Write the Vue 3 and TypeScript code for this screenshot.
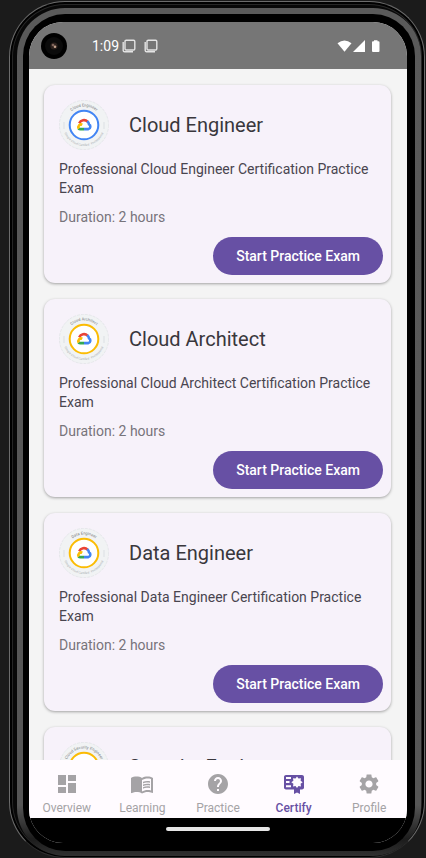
<script setup lang="ts">
import { ref } from 'vue'

interface Exam {
  id: string
  title: string
  badge: string
  description: string
  duration: string
  ring: string
}

interface Tab {
  id: string
  label: string
  path: string
}

const exams: Exam[] = [
  { id: 'engineer', title: 'Cloud Engineer', badge: 'Cloud Engineer', description: 'Professional Cloud Engineer Certification Practice Exam', duration: '2 hours', ring: '#4285f4' },
  { id: 'architect', title: 'Cloud Architect', badge: 'Cloud Architect', description: 'Professional Cloud Architect Certification Practice Exam', duration: '2 hours', ring: '#fbbc04' },
  { id: 'data', title: 'Data Engineer', badge: 'Data Engineer', description: 'Professional Data Engineer Certification Practice Exam', duration: '2 hours', ring: '#fbbc04' },
  { id: 'security', title: 'Security Engineer', badge: 'Cloud Security Engineer', description: 'Professional Security Engineer Certification Practice Exam', duration: '2 hours', ring: '#fbbc04' },
]

const tabs: Tab[] = [
  { id: 'overview', label: 'Overview', path: 'M3 13h8V3H3v10zm0 8h8v-6H3v6zm10 0h8V11h-8v10zm0-18v6h8V3h-8z' },
  { id: 'learning', label: 'Learning', path: 'M21 5c-1.11-.35-2.33-.5-3.5-.5-1.95 0-4.05.4-5.5 1.5-1.45-1.1-3.55-1.5-5.5-1.5S2.45 4.9 1 6v14.65c0 .25.25.5.5.5.1 0 .15-.05.25-.05C3.1 20.45 5.05 20 6.5 20c1.95 0 4.05.4 5.5 1.5 1.35-.85 3.8-1.5 5.5-1.5 1.65 0 3.35.3 4.75 1.05.1.05.15.05.25.05.25 0 .5-.25.5-.5V6c-.6-.45-1.25-.75-2-1zm0 13.5c-1.1-.35-2.3-.5-3.5-.5-1.7 0-4.15.65-5.5 1.5V8c1.35-.85 3.8-1.5 5.5-1.5 1.2 0 2.4.15 3.5.5v11.5zM17.5 10.5c.88 0 1.73.09 2.5.26V9.24c-.79-.15-1.64-.24-2.5-.24-1.7 0-3.24.29-4.5.83v1.66c1.13-.64 2.7-.99 4.5-.99zM13 12.49v1.66c1.13-.64 2.7-.99 4.5-.99.88 0 1.73.09 2.5.26V11.9c-.79-.15-1.64-.24-2.5-.24-1.7 0-3.24.3-4.5.83zM17.5 14.33c-1.7 0-3.24.29-4.5.83v1.66c1.13-.64 2.7-.99 4.5-.99.88 0 1.73.09 2.5.26v-1.52c-.79-.16-1.64-.24-2.5-.24z' },
  { id: 'practice', label: 'Practice', path: 'M12 2C6.48 2 2 6.48 2 12s4.48 10 10 10 10-4.48 10-10S17.52 2 12 2zm1 17h-2v-2h2v2zm2.07-7.75l-.9.92C13.45 12.9 13 13.5 13 15h-2v-.5c0-1.1.45-2.1 1.17-2.83l1.24-1.26c.37-.36.59-.86.59-1.41 0-1.1-.9-2-2-2s-2 .9-2 2H8c0-2.21 1.79-4 4-4s4 1.79 4 4c0 .88-.36 1.68-.93 2.25z' },
  { id: 'certify', label: 'Certify', path: 'M4 3H20C21.1 3 22 3.9 22 5V15.5C22 16.6 21.1 17.5 20 17.5H18V22L15 20.4L12 22V17.5H4C2.9 17.5 2 16.6 2 15.5V5C2 3.9 2.9 3 4 3ZM4 5V7H9V5ZM4 9V11H7.5V9ZM4 13.3V15.3H9V13.3ZM15 4.6L13.5 6.6L11 6.2L11.4 8.8L9.3 10.3L11.4 11.8L11 14.4L13.5 14L15 16L16.5 14L19 14.4L18.6 11.8L20.7 10.3L18.6 8.8L19 6.2L16.5 6.6Z' },
  { id: 'profile', label: 'Profile', path: 'M19.14 12.94c.04-.3.06-.61.06-.94 0-.32-.02-.64-.07-.94l2.03-1.58c.18-.14.23-.41.12-.61l-1.92-3.32c-.12-.22-.37-.29-.59-.22l-2.39.96c-.5-.38-1.03-.7-1.62-.94l-.36-2.54c-.04-.24-.24-.41-.48-.41h-3.84c-.24 0-.43.17-.47.41l-.36 2.54c-.59.24-1.13.57-1.62.94l-2.39-.96c-.22-.08-.47 0-.59.22L2.74 8.87c-.12.21-.08.47.12.61l2.03 1.58c-.05.3-.09.63-.09.94s.02.64.07.94l-2.03 1.58c-.18.14-.23.41-.12.61l1.92 3.32c.12.22.37.29.59.22l2.39-.96c.5.38 1.03.7 1.62.94l.36 2.54c.05.24.24.41.48.41h3.84c.24 0 .44-.17.47-.41l.36-2.54c.59-.24 1.13-.56 1.62-.94l2.39.96c.22.08.47 0 .59-.22l1.92-3.32c.12-.22.07-.47-.12-.61l-2.01-1.58zM12 15.6c-1.98 0-3.6-1.62-3.6-3.6s1.62-3.6 3.6-3.6 3.6 1.62 3.6 3.6-1.62 3.6-3.6 3.6z' },
]

const activeTab = ref<string>('certify')
</script>

<template>
  <div class="device">
    <div class="rim">
      <div class="bezel">
        <div class="screen">
          <header class="status">
            <svg class="camera" viewBox="0 0 26 26" aria-hidden="true">
              <circle cx="13" cy="13" r="13" fill="#000" />
              <circle cx="13" cy="13" r="9" fill="#0b0b0b" />
              <circle cx="13" cy="13" r="3.6" fill="#2c211d" />
              <circle cx="12" cy="12" r="1.3" fill="#7d6459" />
              <circle cx="14" cy="13.8" r="1.3" fill="#c3a28d" />
            </svg>
            <span class="time">1:09</span>
            <svg v-for="n in 2" :key="n" class="note" viewBox="0 0 14 14" aria-hidden="true">
              <rect x="3" y="1.2" width="9.8" height="9.8" rx="1.2" />
              <path d="M1.2 3V11.4Q1.2 12.8 2.6 12.8H11" />
            </svg>
            <svg class="signals" viewBox="0 0 44 14" aria-hidden="true">
              <path d="M0.5 4.2Q7.5 -1.2 14.5 4.2L7.5 12.8Z" />
              <path d="M28 1V13H16Z" />
              <path d="M37 1.2H40.5V2.2H41.5Q42.5 2.2 42.5 3.2V12Q42.5 13 41.5 13H36Q35 13 35 12V3.2Q35 2.2 36 2.2H37Z" />
            </svg>
          </header>

          <main class="list">
            <article v-for="exam in exams" :key="exam.id" class="card">
              <div class="heading">
                <svg class="badge" viewBox="0 0 50 50" aria-hidden="true">
                  <circle cx="25" cy="25" r="24.6" fill="#f1f3f4" stroke="#dfe2e5" stroke-width=".7" stroke-dasharray="3 1" />
                  <path d="M5 22V29M45 22V29" stroke="#cfd4d8" stroke-width=".6" />
                  <path :id="'top-' + exam.id" d="M6.5 25A18.5 18.5 0 0 1 43.5 25" fill="none" />
                  <path :id="'base-' + exam.id" d="M4 25A21 21 0 0 0 46 25" fill="none" />
                  <text class="engraving"><textPath :href="'#top-' + exam.id" startOffset="50%">{{ exam.badge }}</textPath></text>
                  <text class="engraving faint"><textPath :href="'#base-' + exam.id" startOffset="50%">Google Cloud Certified · Professional</textPath></text>
                  <circle cx="25" cy="25" r="14.3" fill="#fff" :stroke="exam.ring" stroke-width="2" />
                  <g fill="none" stroke-width="2.6">
                    <path d="M20.2 23.2A5.2 5.2 0 0 1 28.6 21.6" stroke="#ea4335" />
                    <path d="M28.2 21.2Q29.8 22.5 30 24.3A2.6 2.6 0 0 1 29.4 29.1H25" stroke="#4285f4" />
                    <path d="M25 29.1H21.3Q20.2 29.1 19.4 28.4" stroke="#34a853" />
                    <path d="M19.7 28.6A2.8 2.8 0 0 1 23.3 24.7" stroke="#fbbc04" />
                  </g>
                </svg>
                <h2>{{ exam.title }}</h2>
              </div>
              <p class="description">{{ exam.description }}</p>
              <p class="duration">Duration: {{ exam.duration }}</p>
              <button type="button" class="start">Start Practice Exam</button>
            </article>
          </main>

          <nav class="tabs">
            <button
              v-for="tab in tabs"
              :key="tab.id"
              type="button"
              class="tab"
              :class="{ active: tab.id === activeTab }"
              @click="activeTab = tab.id"
            >
              <svg viewBox="0 0 24 24" aria-hidden="true"><path fill-rule="evenodd" :d="tab.path" /></svg>
              <span>{{ tab.label }}</span>
            </button>
          </nav>

          <footer class="gesture"><span></span></footer>
        </div>
      </div>
    </div>
  </div>
</template>

<style>
body {
  background: #1b1b1b;
}
</style>

<style scoped>
.device {
  box-sizing: border-box;
  height: 100vh;
  padding: 1px 1px 0 9px;
  overflow: hidden;
  font-family: Roboto, "Liberation Sans", sans-serif;
}

.rim {
  box-sizing: border-box;
  height: 100%;
  padding: 6px 3px 1px 7px;
  border: 1px solid #6c6c6c;
  border-bottom-color: #303030;
  border-radius: 56px;
  background: #080808;
  box-shadow: inset 0 0 0 2px #000, inset 0 0 0 3px #262626;
}

.bezel {
  box-sizing: border-box;
  height: 100%;
  padding: 8px 8px 8px 6px;
  border: 6px solid transparent;
  border-bottom-width: 5px;
  border-radius: 48px;
  background:
    linear-gradient(#000, #000) padding-box,
    linear-gradient(#5a5a5a, #565656 94%, #1c1c1c 98%, #303030) border-box;
}

.screen {
  display: flex;
  flex-direction: column;
  height: 100%;
  overflow: hidden;
  border-radius: 34px;
  background: #f4f4f4;
}

.status {
  display: flex;
  flex: none;
  align-items: center;
  height: 47px;
  padding: 0 26px 0 12px;
  background: #767676;
  color: #fff;
}

.camera {
  width: 26px;
  height: 26px;
  margin-right: 25px;
}

.time {
  margin-right: 3px;
  font-size: 14px;
  line-height: 20px;
}

.note {
  width: 14px;
  height: 14px;
  margin-right: 8px;
  fill: none;
  stroke: #e4e4e4;
  stroke-width: 1.4;
}

.signals {
  width: 44px;
  height: 14px;
  margin-left: auto;
  fill: #fff;
}

.list {
  display: flex;
  flex: 1;
  flex-direction: column;
  gap: 16px;
  min-height: 0;
  padding: 16px 16px 16px 15px;
  overflow-y: auto;
  scrollbar-width: none;
}

.card {
  display: flex;
  flex: none;
  flex-direction: column;
  padding: 15px 8px 8px 15px;
  border-radius: 11px;
  background: #f7f2fa;
  box-shadow: 0 1px 3px rgba(0, 0, 0, 0.34);
}

.heading {
  display: flex;
  align-items: center;
  gap: 20px;
  margin-bottom: 10px;
}

.badge {
  width: 50px;
  height: 50px;
}

.engraving {
  fill: #777c80;
  font-size: 4px;
  text-anchor: middle;
}

.faint {
  fill: #a4a9ad;
  font-size: 3px;
}

h2,
p {
  margin: 0;
}

h2 {
  color: #39373c;
  font-size: 20px;
  font-weight: 400;
  line-height: 26px;
}

.description,
.duration {
  font-size: 14px;
  line-height: 19px;
}

.description {
  margin-bottom: 10px;
  color: #49454f;
}

.duration {
  margin-bottom: 10px;
  color: #77747b;
}

.start {
  align-self: flex-end;
  height: 38px;
  padding: 0 23px;
  border: 0;
  border-radius: 19px;
  background: #6750a4;
  color: #fff;
  font-family: inherit;
  font-size: 14px;
  font-weight: 500;
}

.tabs {
  display: grid;
  flex: none;
  grid-template-columns: repeat(5, 1fr);
  height: 58px;
  background: #fffbff;
}

.tab {
  display: flex;
  flex-direction: column;
  align-items: center;
  gap: 4px;
  padding: 12px 0 0;
  border: 0;
  background: none;
  color: #a5a3a6;
  font-family: inherit;
  font-size: 12px;
  line-height: 16px;
}

.tab svg {
  width: 24px;
  height: 24px;
  fill: currentColor;
}

.active {
  color: #6750a4;
  font-weight: 500;
}

.gesture {
  display: flex;
  flex: none;
  justify-content: center;
  height: 25px;
  padding-top: 9px;
  box-sizing: border-box;
  background: #000;
}

.gesture span {
  width: 104px;
  height: 4px;
  border-radius: 2px;
  background: #e6e6e6;
}
</style>
